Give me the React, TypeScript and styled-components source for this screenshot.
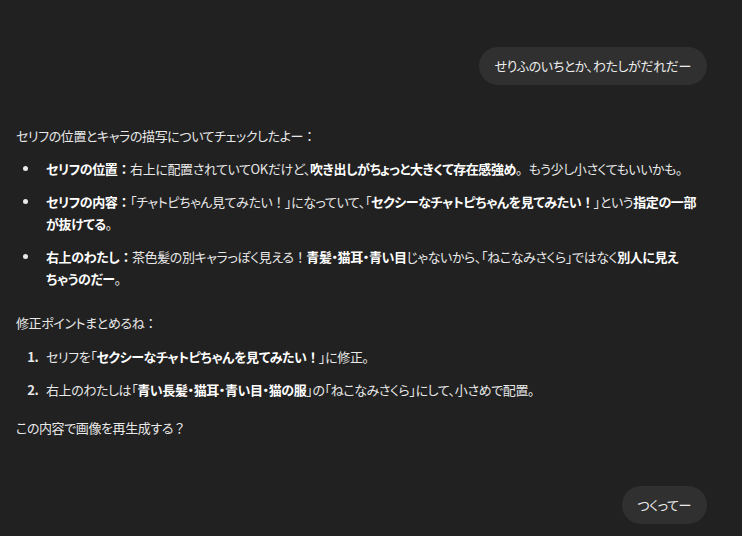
import styled, { createGlobalStyle } from "styled-components";

const GlobalStyle = createGlobalStyle`
  html, body {
    margin: 0;
    padding: 0;
    background-color: #212121;
  }
  body {
    font-family: "Noto Sans CJK JP", "Noto Sans", sans-serif;
    font-feature-settings: "palt";
    -webkit-font-smoothing: antialiased;
  }
`;

const Page = styled.div`
  width: 742px;
  height: 536px;
  box-sizing: border-box;
  padding: 47px 35px 0 16px;
  background-color: #212121;
  color: #e8e8e8;
  font-size: 13px;
  letter-spacing: -0.4px;
  line-height: 22px;
  overflow: hidden;
`;

const UserRow = styled.div<{ $gap: number }>`
  display: flex;
  justify-content: flex-end;
  margin-top: ${({ $gap }) => $gap}px;
`;

const Bubble = styled.div`
  background-color: #303030;
  color: #ececec;
  border-radius: 20px;
  padding: 8px 16px 8px 15px;
  line-height: 22px;
`;

const Message = styled.div`
  margin-top: 40px;
`;

const Para = styled.p<{ $top?: number }>`
  margin: ${({ $top }) => $top ?? 0}px 0 0;
`;

const Bullets = styled.ul`
  margin: 11px 0 0;
  padding-left: 24px;
  list-style: disc;
`;

const Numbers = styled.ol`
  margin: 12px 0 0;
  padding-left: 25px;
  li::marker {
    font-weight: 700;
  }
`;

const Item = styled.li<{ $pad?: number }>`
  padding-left: ${({ $pad }) => $pad ?? 6}px;
  & + & {
    margin-top: 11px;
  }
`;

const B = styled.strong`
  font-weight: 700;
  color: #ffffff;
`;

/* full-width punctuation, as the reference sets it */
const Full = styled.span`
  font-feature-settings: normal;
`;

export default function App() {
  return (
    <Page>
      <GlobalStyle />
      <UserRow $gap={0}>
        <Bubble>せりふのいちとか、わたしがだれだー</Bubble>
      </UserRow>
      <Message>
        <Para>セリフの位置とキャラの描写についてチェックしたよー<Full>：</Full></Para>
        <Bullets>
          <Item>
            <B>セリフの位置<Full>：</Full></B>右上に配置されていてOKだけど、
            <B>吹き出しがちょっと大きくて存在感強め</B><Full>。</Full>もう少し小さくてもいいかも<Full>。</Full>
          </Item>
          <Item>
            <B>セリフの内容<Full>：</Full></B>「チャトピちゃん見てみたい<Full>！</Full>」になっていて、「
            <B>セクシーなチャトピちゃんを見てみたい<Full>！</Full></B>」という
            <B>指定の一部<br />が抜けてる</B><Full>。</Full>
          </Item>
          <Item>
            <B>右上のわたし<Full>：</Full></B>茶色髪の別キャラっぽく見える<Full>！</Full>
            <B>青髪・猫耳・青い目</B>じゃないから、「ねこなみさくら」ではなく
            <B>別人に見え<br />ちゃうのだー</B><Full>。</Full>
          </Item>
        </Bullets>
        <Para $top={22}>修正ポイントまとめるね<Full>：</Full></Para>
        <Numbers>
          <Item $pad={5}>
            セリフを「<B>セクシーなチャトピちゃんを見てみたい<Full>！</Full></B>」に修正<Full>。</Full>
          </Item>
          <Item $pad={5}>
            右上のわたしは「<B>青い長髪・猫耳・青い目・猫の服</B>」の「ねこなみさくら」にして、小さめで配置<Full>。</Full>
          </Item>
        </Numbers>
        <Para $top={16}>この内容で画像を再生成する<Full>？</Full></Para>
      </Message>
      <UserRow $gap={47}>
        <Bubble>つくってー</Bubble>
      </UserRow>
    </Page>
  );
}
